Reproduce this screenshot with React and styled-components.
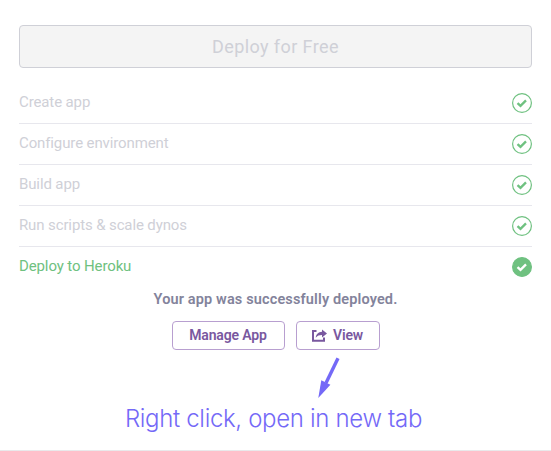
import React from "react";
import styled, { createGlobalStyle } from "styled-components";

const GlobalStyle = createGlobalStyle`
  * { box-sizing: border-box; }
  body { margin: 0; background: #fff; font-family: Roboto, "Liberation Sans", sans-serif; }
`;

const Page = styled.main`
  height: 451px;
  padding: 25px 19px 0;
  overflow: hidden;
  border-bottom: 1px solid #e9e9eb;
  display: flex;
  flex-direction: column;
`;

const DeployButton = styled.button`
  flex: none;
  height: 43px;
  padding: 0;
  border: 1px solid #cfd0d7;
  border-radius: 4px;
  background: #f4f4f4;
  color: #cfd0d7;
  font: 400 18px/41px Roboto, sans-serif;
  letter-spacing: 0.42px;
`;

const Steps = styled.ul`
  list-style: none;
  margin: 15px 0 0;
  padding: 0;
`;

const Step = styled.li`
  height: 41px;
  padding-bottom: 1px;
  display: flex;
  align-items: center;
  justify-content: space-between;
  border-bottom: 1px solid ${(p) => (p.$active ? "transparent" : "#e7e7ed")};
  color: ${(p) => (p.$active ? "#6fc180" : "#cfd0d7")};
  font-size: 15px;
  line-height: 21px;
  letter-spacing: -0.12px;
`;

const StepIcon = styled.svg`
  width: 20px;
  height: 20px;
  flex: none;
  margin-top: 1px;
`;

const Message = styled.p`
  margin: 2px 0 0;
  text-align: center;
  color: #83839b;
  font-size: 14.5px;
  font-weight: 600;
  line-height: 20px;
  letter-spacing: 0.14px;
`;

const Actions = styled.div`
  display: flex;
  justify-content: center;
  gap: 11px;
  margin-top: 11px;
`;

const ActionButton = styled.button`
  width: ${(p) => p.$width}px;
  height: 29px;
  padding: 0 0 1px;
  display: flex;
  align-items: center;
  justify-content: center;
  gap: 6px;
  border: 1px solid #b89fd0;
  border-radius: 4px;
  background: #fff;
  color: #79589f;
  font: 600 14px/20px Roboto, sans-serif;
  letter-spacing: -0.15px;
`;

const Arrow = styled.svg`
  display: block;
  flex: none;
  width: 24px;
  height: 43px;
  margin: 6px 0 0 299px;
`;

const Hint = styled.p`
  margin: 5px 0 0;
  padding-right: 4px;
  text-align: center;
  white-space: nowrap;
  color: #7469f7;
  font: 300 24px/30px Inter, sans-serif;
  letter-spacing: -0.33px;
`;

const steps = [
  "Create app",
  "Configure environment",
  "Build app",
  "Run scripts & scale dynos",
  "Deploy to Heroku",
];

function CheckIcon({ filled }) {
  return (
    <StepIcon viewBox="0 0 20 20" aria-hidden="true">
      <circle cx="10" cy="10" r="9.4" fill={filled ? "#6fc180" : "#fff"} stroke="#6fc180" strokeWidth="1.2" />
      <path d="M5.5 10.1 8.5 12.9 14 7.4" fill="none" stroke={filled ? "#fff" : "#6fc180"} strokeWidth="2.3" />
    </StepIcon>
  );
}

function ShareIcon() {
  return (
    <svg width="15" height="13" viewBox="0 0 15 13" aria-hidden="true">
      <path d="M4.5 2H1v9.7h11V8.5" fill="none" stroke="currentColor" strokeWidth="2" />
      <path d="M10 0.4 15 4.4 10 8.4V6C7.3 6 5.3 6.7 3.7 8.8 4.1 5.2 6.5 3 10 2.8Z" fill="currentColor" />
    </svg>
  );
}

export default function App() {
  return (
    <>
      <GlobalStyle />
      <Page>
        <DeployButton disabled>Deploy for Free</DeployButton>
        <Steps>
          {steps.map((label, i) => {
            const active = i === steps.length - 1;
            return (
              <Step key={label} $active={active}>
                <span>{label}</span>
                <CheckIcon filled={active} />
              </Step>
            );
          })}
        </Steps>
        <Message>Your app was successfully deployed.</Message>
        <Actions>
          <ActionButton $width={113}>Manage App</ActionButton>
          <ActionButton $width={84}>
            <ShareIcon />
            View
          </ActionButton>
        </Actions>
        <Arrow viewBox="0 0 24 43" aria-hidden="true">
          <path d="M20 2.2 8 27" stroke="#7469f7" strokeWidth="3.4" />
          <path d="M0.3 42 3.3 24.3 12.4 28.8Z" fill="#7469f7" />
        </Arrow>
        <Hint>Right click, open in new tab</Hint>
      </Page>
    </>
  );
}
